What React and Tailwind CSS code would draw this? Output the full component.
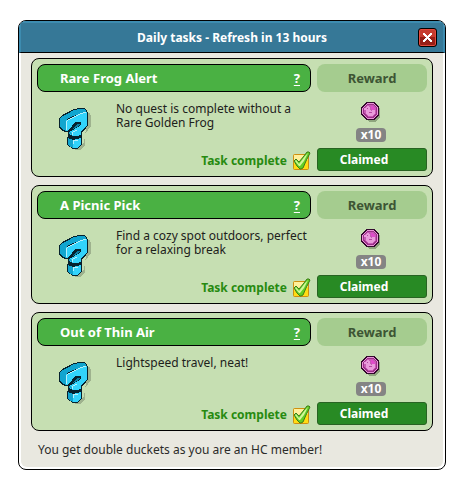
const tasks = [
  { id: 1, title: 'Rare Frog Alert', text: 'No quest is complete without a Rare Golden Frog', amount: 10 },
  { id: 2, title: 'A Picnic Pick', text: 'Find a cozy spot outdoors, perfect for a relaxing break', amount: 10 },
  { id: 3, title: 'Out of Thin Air', text: 'Lightspeed travel, neat!', amount: 10 },
]

function QuestionIcon() {
  return (
    <svg width="34" height="44" viewBox="0 0 34 44" shapeRendering="crispEdges" aria-hidden="true">
      {/* Shadow */}
      <path d="M29 5h2l1 3v10l-3 4-3 3v12l-5 5h-4l-3-2 11-5z" fill="#9eb28e" />
      {/* Outline */}
      <path d="M0 10L3 7 9 4 15 1 20 0H25L28 2 29 5V17L27 20 23 24V28L22 29 23 30V37L18 41H14L8 37V29L9 28V24H6L2 22 0 20Z" fill="#06222e" />
      {/* Side and top */}
      <path d="M1 10L4 8 10 5 15 2 20 1H24L27 2V4L20 6 12 9 7 12V23L3 21 1 19Z" fill="#11a5cf" />
      {/* Front face */}
      <path d="M8 12L12 10 20 6 26 4H28V17L26 20 22 23V27L18 28H14L10 26V24L14 22 19 19 22 17V14H17L14 16 12 20 8 23H7V12Z" fill="#32d3fb" />
      <path d="M15 19L18 16H21V17L18 19 14 21Z" fill="#0c7da0" />
      <path d="M10 24L13 25V27L10 26Z" fill="#11a5cf" />
      {/* Dot */}
      <path d="M9 30L14 32V40L9 37Z" fill="#11a5cf" />
      <path d="M14 32L22 30V37L18 40H14Z" fill="#32d3fb" />
      {/* Highlights */}
      <path d="M7 13h1v9H7zM8 12h1v1H8zM9 11h2v1H9zM11 10h2v1h-2zM13 9h2v1h-2zM15 8h2v1h-2zM17 7h2v1h-2zM19 6h2v1h-2zM21 5h3v1h-3zM24 4h3v1h-3zM13 24h1v3h-1zM14 23h2v1h-2zM16 22h2v1h-2zM14 32h1v4h-1zM15 32h4v1h-4z" fill="#b4f0fc" />
    </svg>
  )
}

function DucketIcon() {
  return (
    <svg width="20" height="21" viewBox="0 0 20 21" shapeRendering="crispEdges" aria-hidden="true">
      <path d="M7 2h7l5 5v8l-5 5H8l-5-5z" fill="#8fa67e" />
      <path d="M5 0h8l5 5v8l-5 5H5l-5-5V5z" fill="#34092e" />
      <path d="M6 1h6l5 5v6l-5 5H6l-5-5V6z" fill="#e993d8" />
      <path d="M6 2h6l4 4v6l-4 4H6l-4-4V6z" fill="#9c3189" />
      <path d="M7 3h5l3 3v5l-3 4H7l-4-4V6z" fill="#c65bb3" />
      <path d="M3 6h2V5h1V4h2v1h1v3h1v1h1V8h3v4h-1v1h-1v1H7v-1H6v-1H5V8H3z" fill="#e99bdb" />
      <path d="M10 4h2v1h1v1h1v2h-3V7h-1z" fill="#e04bcb" />
      <path d="M6 6h1v1H6zM8 10h3v1H8z" fill="#b548a0" />
    </svg>
  )
}

function CheckIcon() {
  return (
    <svg width="18" height="20" viewBox="0 0 18 20" aria-hidden="true">
      <rect x="0.5" y="3.5" width="15" height="15" rx="1" fill="#ffdc14" stroke="#cf8f10" />
      <path d="M1 4h14v5L1 12z" fill="#fff09a" />
      <path
        d="M1 10l2-2 3 3 5-6 3-4h2l1 1-4 8-3 7-2 1H7l-3-3z"
        fill="#62cf25"
        stroke="#3c7c18"
        strokeLinejoin="round"
      />
      <path d="M2 10l1-1 3 4 6-8 3-3-4 8-4 5H6z" fill="#d2f79a" />
    </svg>
  )
}

function CloseIcon() {
  return (
    <svg width="9" height="9" viewBox="0 0 9 9" shapeRendering="crispEdges" aria-hidden="true">
      <path d="M0 0h2v1h1v1h1v1h1V2h1V1h1V0h2v2H8v1H7v1H6v1h1v1h1v1h1v2H7V8H6V7H5V6H4v1H3v1H2v1H0V7h1V6h1V5h1V4H2V3H1V2H0z" fill="#fff" />
    </svg>
  )
}

function TaskCard({ task }) {
  return (
    <article className="grid grid-cols-[1fr_110px] gap-x-[6px] rounded-lg border border-black bg-[#c6dfb2] p-[5px]">
      {/* Task */}
      <section className="flex min-w-0 flex-col">
        <header className="flex h-7 items-center justify-between rounded-lg border border-black bg-[#4ab143] pt-px pr-[10px] pl-[22px] text-[13px] font-bold text-white">
          <h2>{task.title}</h2>
          <a href="#help" aria-label={`Help for ${task.title}`} className="underline underline-offset-2">?</a>
        </header>
        <div className="flex grow pt-4 pl-[22px]">
          <div className="w-[57px] shrink-0">
            <QuestionIcon />
          </div>
          <div className="flex grow flex-col justify-between">
            <p className="-mt-[6px] pr-1 leading-[14px] text-[#1d211b]">{task.text}</p>
            <p className="flex items-center justify-end gap-[6px] font-bold text-[#278a10]">
              Task complete
              <CheckIcon />
            </p>
          </div>
        </div>
      </section>

      {/* Reward */}
      <section className="flex flex-col items-center">
        <h3 className="flex h-7 w-full items-center justify-center rounded-lg bg-[#a5cc8f] pt-px text-[13px] font-bold text-[#3d5534]">
          Reward
        </h3>
        <div className="mt-[10px] pr-[2px]">
          <DucketIcon />
        </div>
        <span className="mt-[5px] mr-[2px] rounded bg-[#848484] px-[5px] text-xs leading-[14px] font-bold text-white">
          x{task.amount}
        </span>
        <button
          type="button"
          className="mt-[6px] h-[23px] w-full rounded-[3px] border border-[#286322] bg-[#288a24] pr-4 font-bold text-white"
        >
          Claimed
        </button>
      </section>
    </article>
  )
}

export default function App() {
  return (
    <main className="bg-white pt-5 pr-4 pb-5 pl-[18px] font-['Noto_Sans','Open_Sans',sans-serif] text-xs">
      <section className="overflow-hidden rounded-lg border border-black bg-white">
        {/* Title bar */}
        <header className="grid h-8 grid-cols-[28px_1fr_28px] items-center border-x-2 border-t-2 border-b border-x-[#3d8cb0] border-t-[#3d8cb0] border-b-black bg-[#367897]">
          <h1 className="col-start-2 text-center font-bold text-white">Daily tasks - Refresh in 13 hours</h1>
          <button
            type="button"
            aria-label="Close"
            className="ml-[3px] flex size-[19px] items-center justify-center rounded-[3px] border border-black bg-linear-to-b from-[#c63b2f] from-50% to-[#971f17] to-50% inset-ring inset-ring-[#e54a3c]"
          >
            <CloseIcon />
          </button>
        </header>

        {/* Tasks */}
        <div className="mx-[2px] mb-[2px] rounded-b-md bg-[#e9e8e0] px-[10px] pt-[5px] pb-2">
          <div className="flex flex-col gap-2">
            {tasks.map((task) => (
              <TaskCard key={task.id} task={task} />
            ))}
          </div>
          <p className="mt-[10px] pl-[7px] leading-[18px] text-[#2b2b29]">
            You get double duckets as you are an HC member!
          </p>
        </div>
      </section>
    </main>
  )
}
